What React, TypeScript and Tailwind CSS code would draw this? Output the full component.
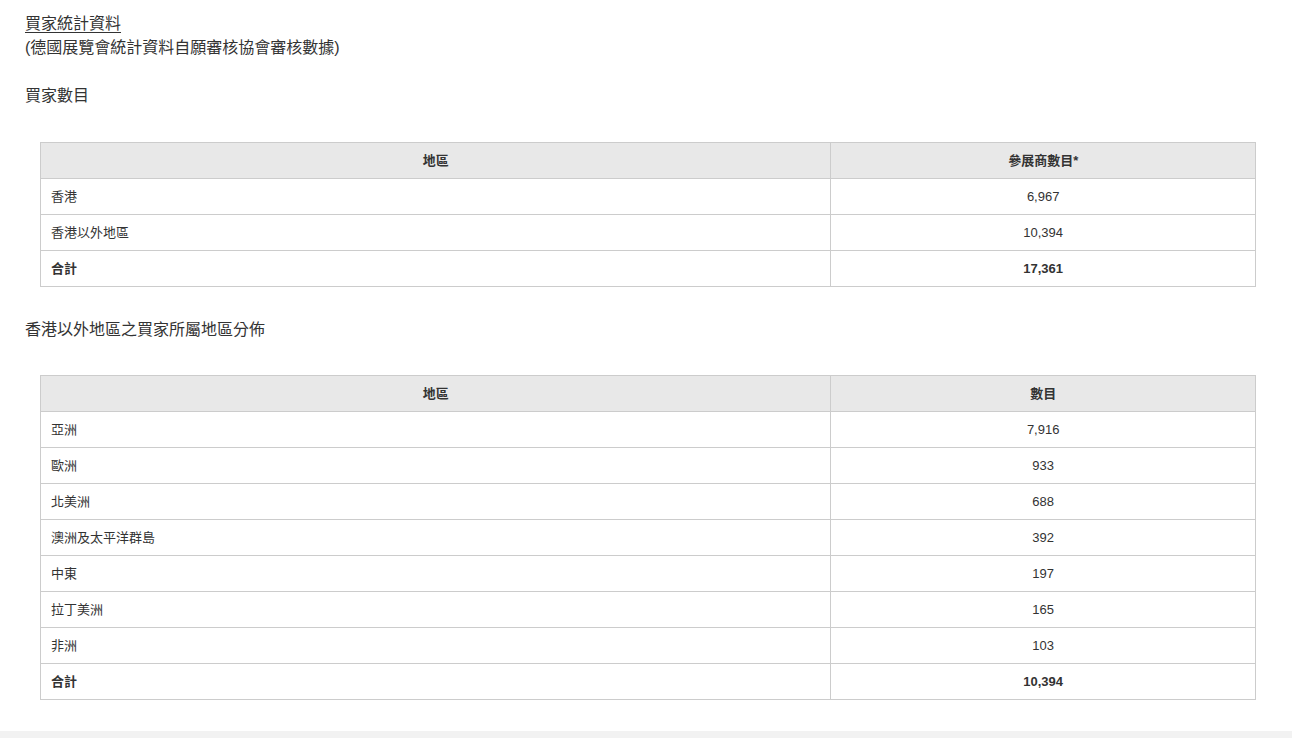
import React from "react";

const font = { fontFamily: '"Liberation Sans", "Noto Sans CJK TC", sans-serif' };

type Row = { label: string; value: string; bold?: boolean };

function DataTable({ head2, rows }: { head2: string; rows: Row[] }) {
  return (
    <table className="w-[1216px] ml-[15px] border-collapse text-[13px] text-[#333]">
      <colgroup>
        <col className="w-[791px]" />
        <col className="w-[425px]" />
      </colgroup>
      <thead>
        <tr className="h-[36px] bg-[#e8e8e8]">
          <th className="border border-[#cccccc] font-bold text-center align-middle">地區</th>
          <th className="border border-[#cccccc] font-bold text-center align-middle">{head2}</th>
        </tr>
      </thead>
      <tbody>
        {rows.map((r) => (
          <tr key={r.label} className="h-[36px]">
            <td className={`border border-[#cccccc] px-[10px] align-middle ${r.bold ? "font-bold" : ""}`}>{r.label}</td>
            <td className={`border border-[#cccccc] text-center align-middle ${r.bold ? "font-bold" : ""}`}>{r.value}</td>
          </tr>
        ))}
      </tbody>
    </table>
  );
}

export default function App() {
  return (
    <div className="w-[1292px] min-h-[738px] bg-white flex flex-col" style={font}>
      <div className="px-[25px] pt-[12px] text-[16px] leading-[24px] text-[#333]">
        <div className="underline underline-offset-[3px]">買家統計資料</div>
        <div>(德國展覽會統計資料自願審核協會審核數據)</div>
        <div className="mt-[24px]">買家數目</div>
        <div className="mt-[34px]">
          <DataTable
            head2="參展商數目*"
            rows={[
              { label: "香港", value: "6,967" },
              { label: "香港以外地區", value: "10,394" },
              { label: "合計", value: "17,361", bold: true },
            ]}
          />
        </div>
        <div className="mt-[31px]">香港以外地區之買家所屬地區分佈</div>
        <div className="mt-[33px]">
          <DataTable
            head2="數目"
            rows={[
              { label: "亞洲", value: "7,916" },
              { label: "歐洲", value: "933" },
              { label: "北美洲", value: "688" },
              { label: "澳洲及太平洋群島", value: "392" },
              { label: "中東", value: "197" },
              { label: "拉丁美洲", value: "165" },
              { label: "非洲", value: "103" },
              { label: "合計", value: "10,394", bold: true },
            ]}
          />
        </div>
      </div>
      <div className="mt-[31px] h-[40px] bg-[#f2f2f2]" />
    </div>
  );
}
